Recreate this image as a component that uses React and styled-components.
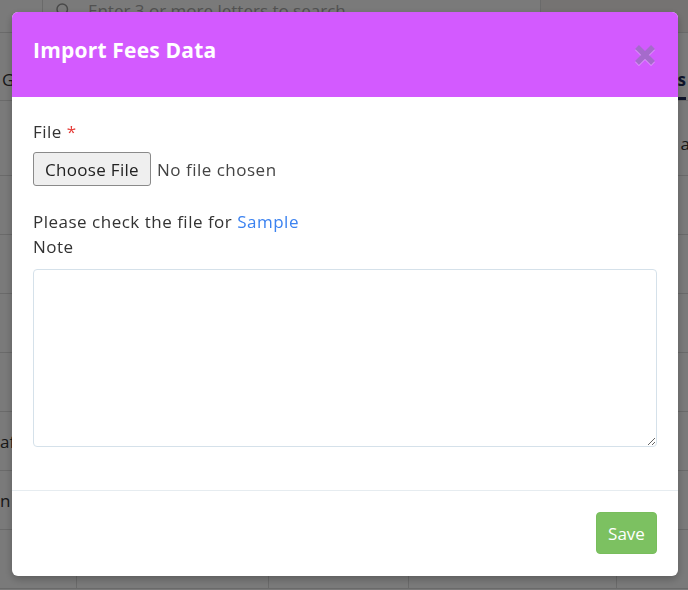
import React from 'react';
import styled, { createGlobalStyle } from 'styled-components';

const GlobalStyle = createGlobalStyle`
	html, body {
		margin: 0;
		padding: 0;
		overflow: hidden;
	}
	body {
		font-family: "Open Sans", Arial, sans-serif;
		color: #333;
	}
`;

const rows = ['', '', '', '', '', 'af', 'n', ''];

const App = () => (
	<>
		<GlobalStyle />
		<Page>
			<SearchRow>
				<SearchBox>
					<svg width="18" height="18" viewBox="0 0 24 24" fill="none" stroke="#999" strokeWidth="2">
						<circle cx="11" cy="11" r="7" />
						<path d="M16.5 16.5L21 21" />
					</svg>
					<span>Enter 3 or more letters to search</span>
				</SearchBox>
				<SearchSide />
			</SearchRow>
			<Tabs>
				<Tab>General</Tab>
				<Tab active>Fees</Tab>
			</Tabs>
			<Table>
				{rows.map((r, i) => (
					<TableRow key={i}>
						<Cell>{r}</Cell>
						<Cell />
						<Cell />
						<Cell />
						<LastCell>{i === 0 ? 'a' : ''}</LastCell>
					</TableRow>
				))}
			</Table>
		</Page>

		<Overlay>
			<Modal>
				<ModalHeader>
					<ModalTitle>Import Fees Data</ModalTitle>
					<CloseButton aria-label="Close">
						<svg width="24" height="22" viewBox="0 0 24 22">
							<path d="M4 3L20 19M20 3L4 19" stroke="#fff" strokeOpacity="0.4" strokeWidth="5.5" transform="translate(0 1)" />
							<path d="M4 3L20 19M20 3L4 19" stroke="#a56bcb" strokeWidth="5.5" />
						</svg>
					</CloseButton>
				</ModalHeader>

				<ModalBody>
					<Label>
						File <Required>*</Required>
					</Label>
					<FileInput type="file" />
					<Hint>
						Please check the file for <Link href="#">Sample</Link>
					</Hint>
					<Label>Note</Label>
					<NoteArea />
				</ModalBody>

				<ModalFooter>
					<SaveButton>Save</SaveButton>
				</ModalFooter>
			</Modal>
		</Overlay>
	</>
);

export default App;

const Page = styled.div`
	width: 688px;
	height: 590px;
	overflow: hidden;
	background: #fff;
	font-family: "Open Sans", sans-serif;
	color: #333;
`;

const SearchRow = styled.div`
	display: flex;
	height: 44px;
	margin-top: -12px;
	border-bottom: 1px solid #ddd;
`;

const SearchBox = styled.div`
	display: flex;
	align-items: center;
	gap: 16px;
	margin-left: 42px;
	padding-left: 11px;
	width: 486px;
	border-left: 1px solid #ddd;
	border-right: 1px solid #ddd;
	font-size: 17px;
	color: #aaa;
`;

const SearchSide = styled.div`
	flex: 1;
	background: #f4f0ee;
`;

const Tabs = styled.div`
	display: flex;
	justify-content: space-between;
	align-items: flex-end;
	height: 67px;
	border-bottom: 1px solid #ddd;
`;

const Tab = styled.div`
	padding: 0 0 6px;
	margin: 0 ${p => (p.active ? '2px' : '0')} 0 ${p => (p.active ? '0' : '2px')};
	font-size: 17px;
	font-weight: ${p => (p.active ? 700 : 400)};
	color: ${p => (p.active ? '#1d2b5a' : '#333')};
	border-bottom: 3px solid ${p => (p.active ? '#1d2b5a' : 'transparent')};
`;

const Table = styled.div`
	display: flex;
	flex-direction: column;
	margin-top: 16px;
`;

const TableRow = styled.div`
	display: grid;
	grid-template-columns: 77px 192px 140px 208px 1fr;
	height: 58px;
	border-bottom: 1px solid #ddd;
`;

const Cell = styled.div`
	display: flex;
	align-items: center;
	font-size: 17px;
	border-right: 1px solid #ddd;
`;

const LastCell = styled(Cell)`
	justify-content: flex-end;
	margin-right: -2px;
	border-right: 0;
	margin-top: -6px;
`;

const Overlay = styled.div`
	position: fixed;
	inset: 0;
	background: rgba(0, 0, 0, 0.52);
	display: flex;
	justify-content: center;
	align-items: flex-start;
	padding-top: 12px;
`;

const Modal = styled.div`
	width: 666px;
	height: 564px;
	margin-left: 2px;
	background: #fff;
	border-radius: 6px;
	display: flex;
	flex-direction: column;
	overflow: hidden;
	box-shadow: 0 3px 9px rgba(0, 0, 0, 0.25);
`;

const ModalHeader = styled.div`
	height: 85px;
	box-sizing: border-box;
	padding: 24px 21px 0;
	display: flex;
	justify-content: space-between;
	align-items: flex-start;
	background: #d35aff;
`;

const ModalTitle = styled.h4`
	margin: 0;
	font-family: "Open Sans", sans-serif;
	font-size: 21px;
	font-weight: 700;
	letter-spacing: 0.2px;
	line-height: 28px;
	color: #fff;
`;

const CloseButton = styled.button`
	margin-top: 8px;
	padding: 0;
	border: 0;
	background: none;
	cursor: pointer;
	line-height: 0;
`;

const ModalBody = styled.div`
	flex: 1;
	padding: 22px 21px 0;
	display: flex;
	flex-direction: column;
	align-items: flex-start;
	letter-spacing: 0.5px;
`;

const Label = styled.label`
	font-size: 17px;
	line-height: 25px;
	color: #333;
`;

const Required = styled.span`
	color: #e53935;
`;

const FileInput = styled.input`
	margin: 8px 0 23px;
	font-family: "Open Sans", Arial, sans-serif;
	font-size: 17px;
	letter-spacing: 0.5px;
	color: #444;
	&::file-selector-button {
		height: 34px;
		width: 118px;
		margin-right: 6px;
		font-family: "Open Sans", Arial, sans-serif;
		font-size: 17px;
		letter-spacing: 0.3px;
		color: #222;
		background: #efefef;
		border: 1px solid #8a8a8a;
		border-radius: 3px;
	}
`;

const Hint = styled.div`
	font-size: 17px;
	line-height: 25px;
	color: #333;
`;

const Link = styled.a`
	color: #3b82f0;
	text-decoration: none;
`;

const NoteArea = styled.textarea`
	box-sizing: border-box;
	width: 624px;
	height: 178px;
	margin-top: 10px;
	border: 1px solid #d5e1ea;
	border-radius: 4px;
	font-family: "Open Sans", Arial, sans-serif;
	font-size: 16px;
`;

const ModalFooter = styled.div`
	height: 86px;
	box-sizing: border-box;
	padding: 21px 21px 0;
	border-top: 1px solid #e6ecf0;
	display: flex;
	justify-content: flex-end;
	align-items: flex-start;
`;

const SaveButton = styled.button`
	height: 42px;
	width: 61px;
	padding: 0;
	border: 1px solid #78bd5c;
	border-radius: 4px;
	background: #7cc161;
	color: #fff;
	font-family: "Open Sans", Arial, sans-serif;
	font-size: 17px;
	cursor: pointer;
`;
